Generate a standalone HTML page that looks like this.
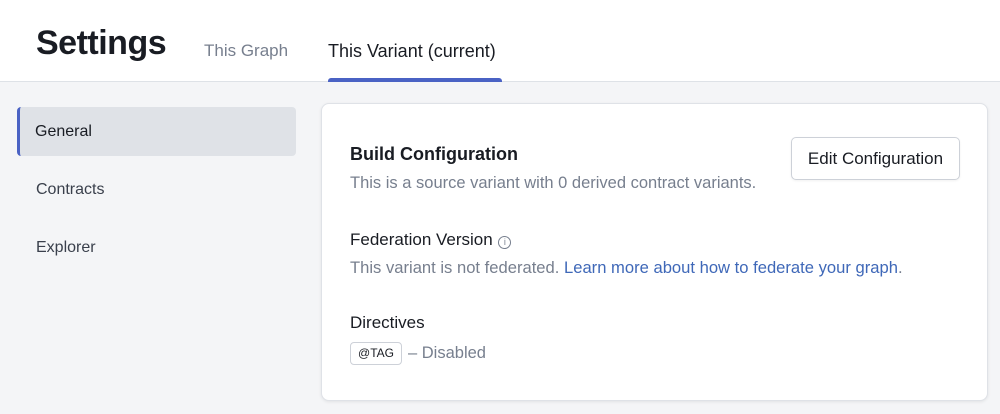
<!DOCTYPE html>
<html><head><style>
*{margin:0;padding:0;box-sizing:border-box}
body{width:1000px;height:414px;background:#f4f5f7;font-family:"Liberation Sans",sans-serif;position:relative;overflow:hidden;color:#191c23}
.a{position:absolute;white-space:nowrap}
.hdr{position:absolute;left:0;top:0;width:1000px;height:82px;background:#fff;border-bottom:1px solid #dee2e7}
.card{position:absolute;left:321px;top:103px;width:667px;height:298px;background:#fff;border:1px solid #dfe2e7;border-radius:8px;box-shadow:0 1px 3px rgba(0,0,0,.08)}
.g{color:#777f8e}
</style></head><body>
<div class="hdr"></div>
<div class="a" style="left:36px;top:24px;font-size:34px;font-weight:bold;letter-spacing:-0.5px">Settings</div>
<div class="a g" style="left:204px;top:41px;font-size:17px">This Graph</div>
<div class="a" style="left:328px;top:41px;font-size:18px">This Variant (current)</div>
<div class="a" style="left:328px;top:78px;width:174px;height:4px;background:#4a62c4;border-radius:3px 3px 0 0"></div>
<div class="a" style="left:17px;top:107px;width:279px;height:49px;background:#dfe2e7;border-radius:4px;border-left:3px solid #4a62c4"></div>
<div class="a" style="left:35px;top:123px;font-size:16px">General</div>
<div class="a" style="left:36px;top:181px;font-size:16px;color:#3a404c">Contracts</div>
<div class="a" style="left:36px;top:239px;font-size:16px;color:#3a404c">Explorer</div>
<div class="card"></div>
<div class="a" style="left:350px;top:144px;font-size:18px;font-weight:bold">Build Configuration</div>
<div class="a g" style="left:350px;top:174px;font-size:16.5px">This is a source variant with 0 derived contract variants.</div>
<div class="a" style="left:791px;top:137px;width:169px;height:43px;border:1px solid #cdd1d8;border-radius:5px;font-size:17px;text-align:center;line-height:41px;box-shadow:0 1px 2px rgba(0,0,0,.06)">Edit Configuration</div>
<div class="a" style="left:350px;top:230px;font-size:17px">Federation Version <span style="display:inline-block;width:13px;height:13px;border:1px solid #777f8e;border-radius:50%;font-size:9px;line-height:11px;text-align:center;color:#777f8e;vertical-align:0px;margin-left:1px">i</span></div>
<div class="a g" style="left:350px;top:258px;font-size:16.6px">This variant is not federated. <span style="color:#3f68b8">Learn more about how to federate your graph</span>.</div>
<div class="a" style="left:350px;top:313px;font-size:17px">Directives</div>
<div class="a" style="left:350px;top:342px;width:52px;height:23px;border:1px solid #cdd1d8;border-radius:4px;font-size:12px;text-align:center;line-height:21px">@TAG</div>
<div class="a g" style="left:408px;top:344px;font-size:16.5px">– Disabled</div>
</body></html>
